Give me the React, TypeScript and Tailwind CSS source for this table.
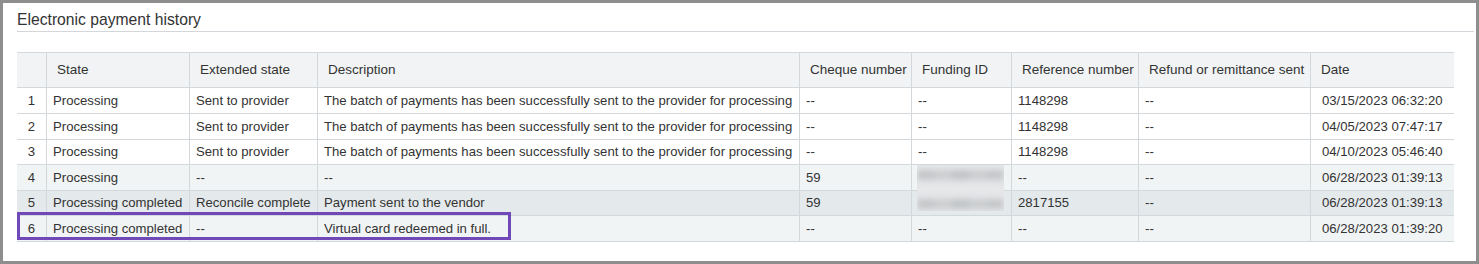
import React from "react";

type Row = {
  n: number;
  state: string;
  ext: string;
  desc: string;
  cheque: string;
  funding: string;
  ref: string;
  refund: string;
  date: string;
  h: string;
  bg: string;
};

const BATCH =
  "The batch of payments has been successfully sent to the provider for processing";

const rows: Row[] = [
  { n: 1, state: "Processing", ext: "Sent to provider", desc: BATCH, cheque: "--", funding: "--", ref: "1148298", refund: "--", date: "03/15/2023 06:32:20", h: "h-[26px]", bg: "bg-white" },
  { n: 2, state: "Processing", ext: "Sent to provider", desc: BATCH, cheque: "--", funding: "--", ref: "1148298", refund: "--", date: "04/05/2023 07:47:17", h: "h-[26px]", bg: "bg-white" },
  { n: 3, state: "Processing", ext: "Sent to provider", desc: BATCH, cheque: "--", funding: "--", ref: "1148298", refund: "--", date: "04/10/2023 05:46:40", h: "h-[25px]", bg: "bg-white" },
  { n: 4, state: "Processing", ext: "--", desc: "--", cheque: "59", funding: "", ref: "--", refund: "--", date: "06/28/2023 01:39:13", h: "h-[26px]", bg: "bg-[#f1f4f5]" },
  { n: 5, state: "Processing completed", ext: "Reconcile complete", desc: "Payment sent to the vendor", cheque: "59", funding: "", ref: "2817155", refund: "--", date: "06/28/2023 01:39:13", h: "h-[25px]", bg: "bg-[#e4e9eb]" },
  { n: 6, state: "Processing completed", ext: "--", desc: "Virtual card redeemed in full.", cheque: "--", funding: "--", ref: "--", refund: "--", date: "06/28/2023 01:39:20", h: "h-[26px]", bg: "bg-[#f1f4f5]" },
];

const GRID =
  "grid grid-cols-[30px_143px_128px_482px_112px_100px_127px_172px_143px]";

const headers = [
  "State",
  "Extended state",
  "Description",
  "Cheque number",
  "Funding ID",
  "Reference number",
  "Refund or remittance sent",
  "Date",
];

// Smudged placeholder standing in for a masked identifier
function Smudge() {
  return (
    <div className="flex flex-col gap-[19px] pt-[5px] px-[0px]">
      {[0, 1].map((k) => (
        <div key={k} className="flex h-[10px] blur-[3px]">
          <div className="flex-1 bg-[#c3c5c7]" />
          <div className="flex-1 bg-[#cbcdcf]" />
          <div className="flex-1 bg-[#c1c3c5]" />
          <div className="flex-1 bg-[#caccce]" />
          <div className="flex-1 bg-[#c4c6c8]" />
        </div>
      ))}
    </div>
  );
}

export default function App() {
  return (
    <div
      className="w-[1479px] h-[264px] border-[3px] border-[#8e8e8e] bg-white text-[#333333] overflow-hidden"
      style={{ fontFamily: '"Liberation Sans", Arial, sans-serif' }}
    >
      <div className="ml-[14px] mr-[2px] mt-[7px] h-[22px] border-b border-[#d3d7db] text-[15.7px] leading-[20px] whitespace-nowrap">
        Electronic payment history
      </div>

      <div className="relative ml-[14px] mt-[20px] w-[1437px]">
        {/* table head */}
        <div className={`${GRID} h-[36px] border-t border-b border-[#d3d8dc] bg-[#f1f3f5] text-[13.5px]`}>
          <div className="border-r border-[#d3d8dc]" />
          {headers.map((h, i) => (
            <div
              key={h}
              className={`flex items-center pl-[10px] pt-[1px] whitespace-nowrap ${
                i < headers.length - 1 ? "border-r border-[#d3d8dc]" : ""
              }`}
            >
              {h}
            </div>
          ))}
        </div>

        {/* table body */}
        {rows.map((r) => {
          const cells = [r.state, r.ext, r.desc, r.cheque, r.funding, r.ref, r.refund];
          return (
            <div
              key={r.n}
              className={`${GRID} ${r.h} ${r.bg} border-b border-[#d3d8dc] text-[13.15px]`}
            >
              <div className="flex items-center justify-center border-r border-[#d3d8dc]">
                {r.n}
              </div>
              {cells.map((c, i) => (
                <div
                  key={i}
                  className="flex items-center pl-[6px] whitespace-nowrap overflow-hidden border-r border-[#d3d8dc]"
                >
                  {c}
                </div>
              ))}
              <div className="flex items-center pl-[11px] whitespace-nowrap">{r.date}</div>
            </div>
          );
        })}

        {/* masked funding IDs */}
        <div className="absolute left-[900px] top-[113px] w-[87px] h-[46px] overflow-hidden bg-[#e5e7e9]">
          <Smudge />
        </div>

        {/* highlighted row outline */}
        <div className="absolute left-0 top-[160px] w-[494px] h-[28px] border-[3px] border-[#7048b8] pointer-events-none" />
      </div>
    </div>
  );
}
